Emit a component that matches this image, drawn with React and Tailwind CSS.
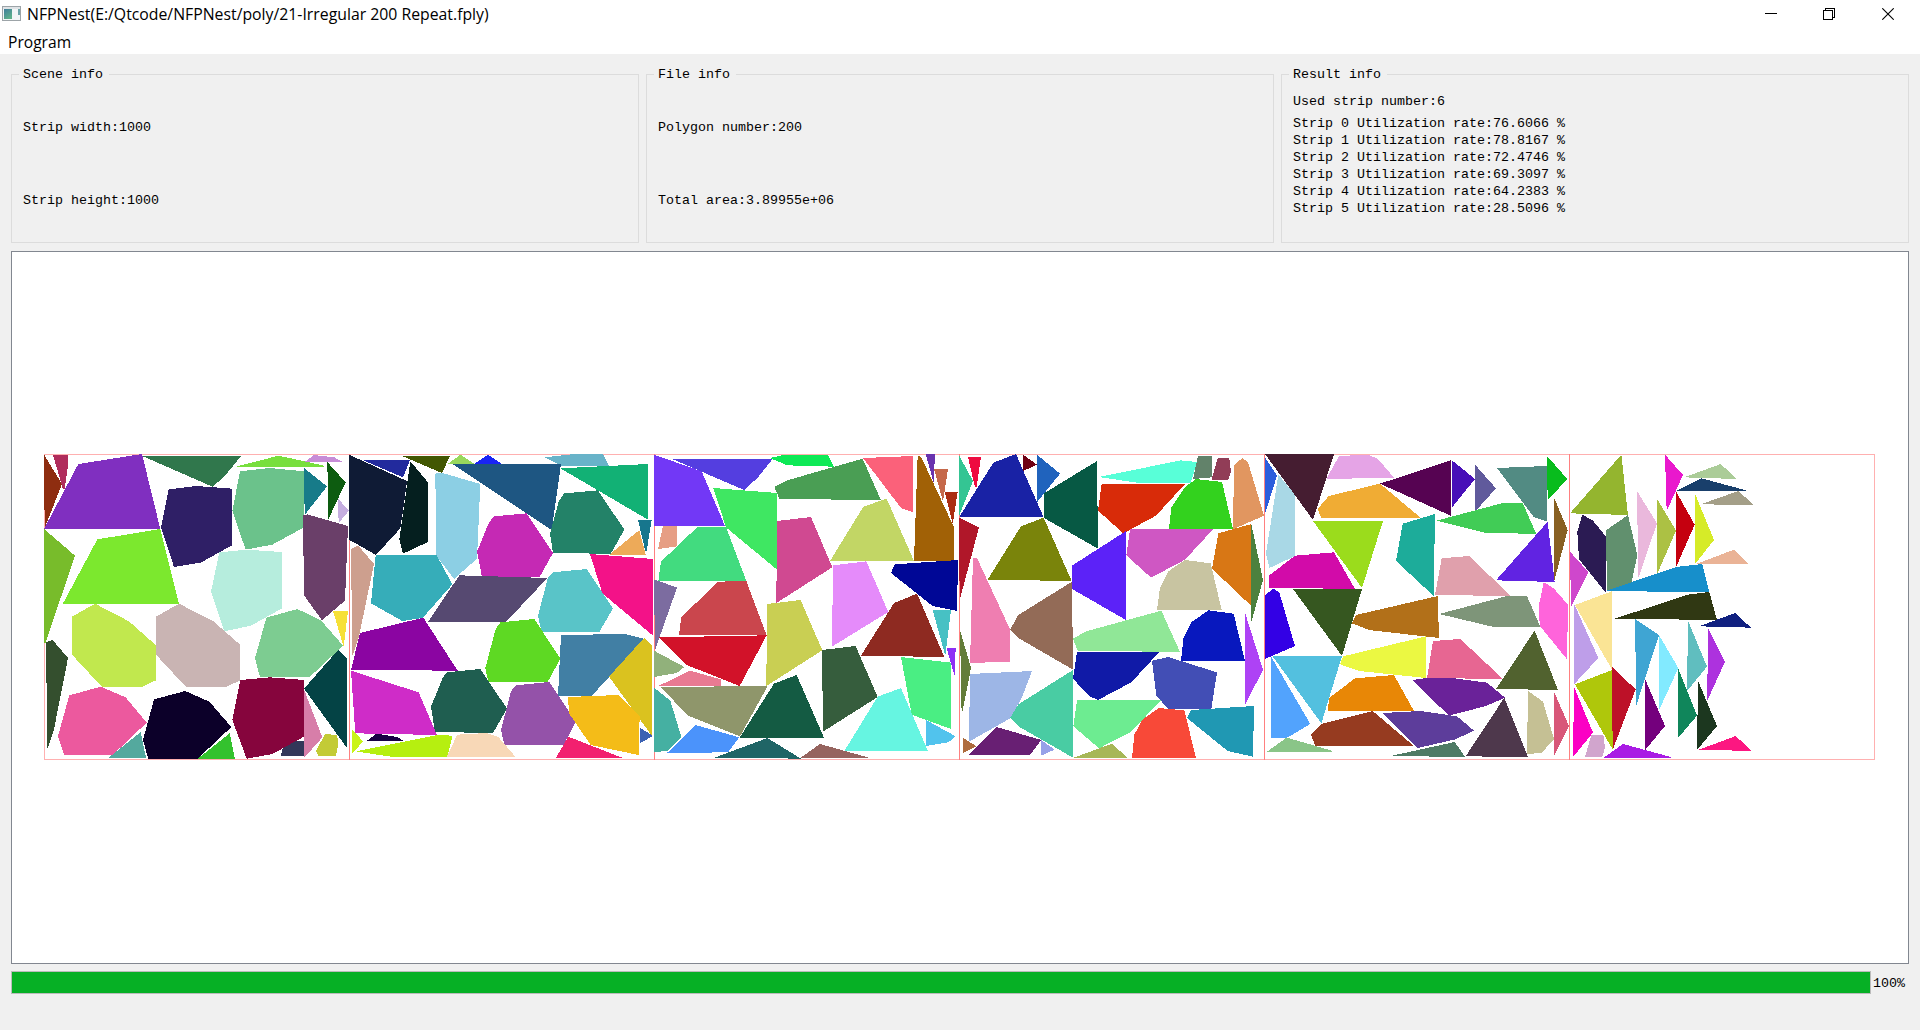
import React from "react";

// Every strip lists its nested polygons as [colour, points]; three units make one pixel.
const strips = [
  [
    ["#8e2d10", "12,14 66,102 14,234"],
    ["#b02d5c", "39,15 84,15 84,45 74,118 69,118"],
    ["#802fc0", "115,42 306,12 361,237 12,237"],
    ["#30774c", "307,18 603,18 553,80 517,110"],
    ["#78df3e", "588,50 716,17 852,47 852,51 588,51"],
    ["#c78cd7", "795,35 822,15 883,22 909,36"],
    ["#2f1f66", "386,118 470,108 576,116 576,286 482,338 402,351 363,232"],
    ["#6bc28b", "600,64 690,54 792,64 792,232 697,284 617,299 577,183"],
    ["#177b89", "792,54 861,109 794,195"],
    ["#0d5c10", "862,36 917,97 865,208"],
    ["#c5aee0", "894,146 927,182 896,219"],
    ["#78bc2b", "12,237 105,317 16,580 12,578"],
    ["#7ce82e", "172,268 361,237 417,462 68,462"],
    ["#b6eddd", "538,307 620,299 726,306 726,475 633,527 553,544 513,425"],
    ["#6a3f69", "789,196 802,193 924,228 915,452 846,511 792,436"],
    ["#c1e84e", "96,500 165,461 267,514 348,586 348,691 305,711 186,711 96,614"],
    ["#c9b4b3", "348,500 417,461 520,514 600,584 601,691 557,711 438,711 348,614"],
    ["#7dcc91", "679,503 772,477 843,511 909,587 808,682 660,682 645,625"],
    ["#f6e038", "879,483 924,483 911,591"],
    ["#344f2e", "18,577 38,570 84,624 41,843 22,897"],
    ["#044345", "792,716 894,600 921,625 921,894"],
    ["#ec599e", "88,736 182,710 257,742 320,818 218,915 72,915 54,858"],
    ["#0c0029", "342,748 436,723 508,755 574,831 472,927 325,927 309,870"],
    ["#54a99e", "302,846 318,923 206,923"],
    ["#34c22e", "569,850 585,927 472,927"],
    ["#333759", "733,873 791,873 791,917 723,917"],
    ["#86053d", "601,690 690,682 792,690 792,860 697,912 620,926 577,810"],
    ["#d77ea9", "792,718 847,862 792,924"],
    ["#c3cb36", "855,852 892,855 894,888 888,917 835,917 828,903"],
  ],
  [
    ["#0f1b35", "12,14 186,93 177,160 166,235 93,315 12,269"],
    ["#222a9d", "52,30 195,30 174,82"],
    ["#425702", "172,18 315,18 291,69"],
    ["#98d85d", "309,41 347,14 387,41"],
    ["#1924f5", "388,41 429,14 469,41"],
    ["#68b3c9", "600,22 690,12 774,12 791,47 650,47"],
    ["#051f1f", "196,34 249,97 249,276 174,311 163,268"],
    ["#8ccfe4", "271,71 289,68 406,102 396,326 327,387 274,317"],
    ["#1e5682", "323,42 648,42 620,240"],
    ["#12b175", "646,55 909,42 909,209"],
    ["#238268", "658,130 759,121 838,239 797,312 624,308 615,250 642,152"],
    ["#17768d", "879,210 920,210 905,303 901,303"],
    ["#edaa59", "883,240 902,315 792,315"],
    ["#c529b4", "446,199 545,190 624,309 584,381 411,381 396,305 430,222"],
    ["#cd9f8e", "18,297 40,287 87,342 42,559 22,618"],
    ["#36adb9", "92,316 275,316 322,403 233,504 172,513 78,460"],
    ["#564971", "343,376 607,384 483,516 249,516"],
    ["#59c4c8", "624,367 725,357 804,475 763,546 590,546 579,498 608,385"],
    ["#f31288", "735,312 925,327 925,558 772,430"],
    ["#8b05a2", "45,549 235,503 338,662 18,660"],
    ["#5ed923", "466,517 568,507 646,626 608,696 430,696 421,654 452,537"],
    ["#417fa4", "648,555 840,552 897,566 740,738 639,738"],
    ["#dac21f", "897,564 921,587 921,858 792,680"],
    ["#cf2cc8", "18,662 221,727 276,855 31,850"],
    ["#1f5e50", "305,667 406,657 486,776 444,849 270,846 258,770 292,686"],
    ["#9452a9", "512,706 613,696 692,815 656,885 478,885 468,840 498,724"],
    ["#f4bc18", "669,741 821,735 884,800 881,915 737,885 672,790"],
    ["#c9f41a", "21,837 54,874 21,912"],
    ["#170044", "66,872 95,851 155,861 178,873"],
    ["#b6ef10", "32,904 276,855 323,857 307,921 137,920"],
    ["#f8d8b7", "337,854 424,849 460,861 511,920 305,920"],
    ["#f2206f", "670,860 831,923 633,923"],
    ["#3c62b3", "885,833 924,858 886,879"],
  ],
  [
    ["#7238f6", "12,14 155,64 225,228 12,228"],
    ["#543ee0", "67,27 368,27 323,83 282,120"],
    ["#0ee956", "359,24 396,16 534,14 551,50 412,46"],
    ["#4a9e54", "373,111 415,90 638,26 693,151 388,146"],
    ["#fb617a", "639,24 789,18 789,187 753,174"],
    ["#a16106", "803,17 813,20 911,230 911,334 792,334"],
    ["#6933ae", "827,12 855,12 851,98"],
    ["#c5684a", "852,57 894,57 879,155"],
    ["#ab2d12", "884,126 923,126 908,222"],
    ["#3fe762", "190,114 381,129 381,359 228,232"],
    ["#d04991", "381,213 483,201 547,352 379,459"],
    ["#c2d665", "640,170 710,146 792,333 540,333"],
    ["#e69e84", "39,228 81,228 81,289 24,297"],
    ["#42db7f", "142,231 228,231 289,393 25,393 33,335"],
    ["#000796", "734,343 924,330 921,483 848,468 723,369"],
    ["#e58bfa", "549,346 649,334 715,486 546,590"],
    ["#7c6ca0", "12,388 81,413 15,600"],
    ["#ca464d", "205,395 289,393 350,556 87,556 94,501"],
    ["#c9cf53", "351,462 452,450 517,601 349,708"],
    ["#8e2a21", "732,459 801,431 883,621 633,617"],
    ["#47c1c4", "848,480 903,480 886,617"],
    ["#8d2ff6", "890,595 917,595 914,678"],
    ["#d21229", "27,562 350,556 269,708 110,645"],
    ["#91b17b", "12,602 103,651 80,669 12,681"],
    ["#e97a92", "27,707 120,662 213,688 213,708"],
    ["#8f966b", "33,711 353,708 270,859 112,796"],
    ["#145b43", "372,701 440,675 522,863 269,863"],
    ["#365d3d", "516,600 617,588 683,741 519,845"],
    ["#4aee83", "753,621 903,638 903,837 785,794"],
    ["#45b0a2", "12,713 61,752 94,861 54,903 12,906"],
    ["#4b93fb", "136,825 268,862 234,907 51,909"],
    ["#66f5e1", "683,740 753,714 834,903 583,903"],
    ["#51c3ed", "828,810 917,859 895,877 828,888"],
    ["#206566", "194,923 352,864 453,926"],
    ["#96645f", "452,923 510,882 657,923"],
  ],
  [
    ["#34c593", "12,16 54,93 12,198"],
    ["#ee0b40", "39,21 78,21 65,112 60,112"],
    ["#1922a5", "115,38 183,12 266,202 12,202"],
    ["#700014", "204,14 246,44 204,63"],
    ["#2063bd", "246,14 315,71 246,157"],
    ["#075944", "426,33 429,296 267,204 267,130"],
    ["#58ffd8", "432,81 677,31 726,36 707,100 545,98"],
    ["#62826a", "729,18 771,18 771,82 714,87"],
    ["#913d57", "788,24 823,24 828,65 820,90 769,91"],
    ["#e19660", "837,45 862,24 879,37 927,197 834,238"],
    ["#d82b09", "440,102 690,102 603,197 505,250 429,182"],
    ["#33d21e", "690,111 723,87 801,96 834,237 642,237 649,172"],
    ["#b01729", "12,202 72,232 14,450"],
    ["#7a840b", "198,229 266,203 350,393 98,389"],
    ["#5c22f8", "513,243 513,510 351,417 351,347"],
    ["#cf57c3", "525,237 775,237 690,329 588,383 514,316"],
    ["#d87715", "790,250 889,222 889,468 771,356"],
    ["#4c813e", "889,222 924,390 889,516"],
    ["#c8c4a1", "640,364 690,330 767,340 800,480 606,480 615,413"],
    ["#ef7eb1", "54,324 66,324 165,538 165,635 45,639"],
    ["#936b57", "351,395 354,659 190,564 165,540 190,495"],
    ["#90e797", "354,566 393,544 619,482 675,606 368,602"],
    ["#0818be", "710,516 760,481 836,491 870,633 678,633 685,566"],
    ["#ae42f5", "870,488 924,659 870,766"],
    ["#637d39", "15,540 48,654 20,796"],
    ["#9db6e6", "45,672 231,663 201,742 166,805 42,875"],
    ["#49cca3", "354,660 354,923 190,829 166,803 190,763"],
    ["#101aa7", "366,606 613,606 529,697 429,750 402,738 354,686"],
    ["#424eb5", "591,632 640,621 786,667 769,777 640,776 604,738"],
    ["#6dec91", "366,750 618,750 529,845 432,895 355,829"],
    ["#f84938", "563,808 612,774 688,781 723,924 531,924 538,854"],
    ["#2098b3", "708,780 897,768 894,920 818,903 696,804"],
    ["#ae6c3e", "24,863 64,889 24,909"],
    ["#681f73", "125,831 259,870 225,915 42,915"],
    ["#97a1e8", "258,870 299,899 258,917"],
    ["#a7b757", "356,923 471,881 517,923"],
  ],
  [
    ["#2b5ddc", "15,22 51,77 15,192"],
    ["#a9d8e6", "55,74 105,134 105,318 28,354 18,310"],
    ["#451d31", "15,12 222,12 159,210"],
    ["#e5a4e6", "237,18 325,14 354,27 402,83 199,87"],
    ["#560352", "360,101 574,30 574,198"],
    ["#f0ac34", "206,138 360,101 483,204 184,204 173,177"],
    ["#480fb8", "576,31 645,87 577,171"],
    ["#605a9c", "645,44 708,115 645,185"],
    ["#528b83", "711,54 861,48 861,215 822,202"],
    ["#08bc1d", "861,18 922,87 863,151"],
    ["#886022", "882,142 923,240 882,396"],
    ["#9bdc1c", "159,213 369,213 306,414"],
    ["#1dac9a", "428,221 525,192 521,438 408,333"],
    ["#41cc56", "530,212 728,159 788,159 829,252 675,248"],
    ["#6123e2", "863,215 884,396 708,391"],
    ["#d20ba9", "105,317 222,307 285,417 27,413 27,377"],
    ["#e0a0ac", "545,325 627,318 753,438 525,435"],
    ["#ff64db", "851,396 882,416 924,464 921,628 839,527 837,465"],
    ["#365720", "99,417 306,417 246,618"],
    ["#3300e5", "15,435 40,416 58,428 105,588 15,627"],
    ["#b27019", "288,495 533,438 537,564 327,540 276,520"],
    ["#7e9579", "537,492 741,438 801,438 841,531 697,530"],
    ["#ebf842", "249,619 498,559 498,684 299,663 240,643"],
    ["#e76692", "519,573 601,567 729,687 501,684"],
    ["#51622f", "824,542 894,720 708,717"],
    ["#52a3fd", "34,621 151,822 80,864 33,864"],
    ["#53c0df", "37,618 246,618 184,820"],
    ["#e88706", "285,685 402,675 462,783 204,783 207,744"],
    ["#6a2299", "456,690 500,684 576,684 681,698 735,743 678,768 567,797"],
    ["#963b20", "183,822 338,783 462,888 166,888 153,855"],
    ["#5d3d9b", "366,789 483,783 591,799 642,842 586,868 474,894"],
    ["#4e384c", "733,743 804,921 617,919"],
    ["#c5c094", "804,723 849,755 882,867 845,909 801,912"],
    ["#d85779", "882,725 927,828 883,915"],
    ["#8ac588", "21,905 80,863 216,902 216,906"],
    ["#4f7b65", "387,919 584,876 615,920"],
  ],
  [
    ["#94b52f", "169,14 189,195 15,190"],
    ["#e918cd", "300,14 354,75 305,183"],
    ["#abcc98", "357,82 467,42 516,87"],
    ["#193f6b", "334,122 410,85 543,121 543,123"],
    ["#a49f88", "407,163 520,123 567,165"],
    ["#eab8dc", "216,123 276,220 220,384"],
    ["#acc144", "276,146 333,242 277,371"],
    ["#c5000f", "333,124 389,224 334,350"],
    ["#d6eb28", "390,131 447,270 390,342"],
    ["#2b1b53", "52,194 84,212 123,260 123,429 42,328 37,245"],
    ["#61906e", "189,195 217,316 199,399 126,423 123,241"],
    ["#cf47cc", "15,305 70,366 18,471"],
    ["#eab396", "396,341 507,299 552,342"],
    ["#178fcb", "125,422 333,351 412,342 433,426 267,425"],
    ["#fae495", "30,465 140,424 140,657"],
    ["#be9ee9", "27,461 100,624 28,702"],
    ["#303813", "149,506 369,434 433,426 456,510"],
    ["#112180", "402,529 510,489 558,533"],
    ["#3fa5d3", "210,507 282,555 214,766"],
    ["#82eaff", "282,555 340,654 282,781"],
    ["#60bebf", "369,512 426,650 366,723"],
    ["#ad32de", "430,536 480,635 426,754"],
    ["#afc70b", "30,703 141,660 144,900"],
    ["#bd1128", "141,651 212,718 143,900"],
    ["#fb00c4", "27,710 84,848 24,921"],
    ["#74007d", "240,686 300,828 240,901"],
    ["#10865b", "340,657 396,797 339,864"],
    ["#1c371f", "399,692 456,828 396,900"],
    ["#d1a5cd", "79,855 115,855 120,893 112,921 60,921"],
    ["#a91be4", "116,923 174,882 318,921 318,924"],
    ["#fc1781", "402,899 512,858 561,903"],
  ],
];

const rates = ["76.6066", "78.8167", "72.4746", "69.3097", "64.2383", "28.5096"];

function AppIcon() {
  return (
    <svg width="19" height="16" viewBox="0 0 19 16" shapeRendering="crispEdges">
      <defs>
        <linearGradient id="pane" x1="0" y1="0" x2="0.6" y2="1">
          <stop offset="0" stopColor="#3f7d9c" />
          <stop offset="1" stopColor="#5eb08a" />
        </linearGradient>
      </defs>
      <rect x="0.5" y="0.5" width="18" height="14" fill="#f3f5f6" stroke="#9da4a8" />
      <rect x="1" y="1" width="17" height="2" fill="#dfe3e6" />
      <rect x="2" y="3" width="8" height="10" fill="url(#pane)" />
      <rect x="16" y="3" width="2" height="6" fill="#6ba3a8" />
    </svg>
  );
}

function TitleBar() {
  return (
    <header className="flex h-7 items-center justify-between pl-0.5">
      <div className="flex items-center gap-[6px]">
        <AppIcon />
        <h1 className="whitespace-pre font-['Open_Sans',sans-serif] text-[15.8px] leading-5">
          NFPNest(E:/Qtcode/NFPNest/poly/21-Irregular 200 Repeat.fply)
        </h1>
      </div>
      <div className="flex items-center pr-[26px]">
        <svg className="mr-[46px]" width="12" height="12" viewBox="0 0 12 12" shapeRendering="crispEdges">
          <path d="M0 5.5H12" stroke="#000" />
        </svg>
        <svg className="mr-[47px]" width="12" height="12" viewBox="0 0 12 12" fill="none" stroke="#000" shapeRendering="crispEdges">
          <path d="M0.5 2.5H9.5V11.5H0.5ZM2.5 2V0.5H11.5V9.5H10" />
        </svg>
        <svg width="12" height="12" viewBox="0 0 12 12" fill="none" stroke="#000" strokeWidth="1.1">
          <path d="M0.3 0.3L11.7 11.7M11.7 0.3L0.3 11.7" />
        </svg>
      </div>
    </header>
  );
}

function GroupBox({ title, titleClass, children }) {
  return (
    <fieldset className="h-[178px] min-w-0 flex-1 border border-[#dcdcdc] px-[11px] pb-px">
      <legend className={"-ml-1 h-[18px] whitespace-pre pl-1 pt-0.5 leading-4 " + titleClass}>{title}</legend>
      {children}
    </fieldset>
  );
}

function NestingView() {
  return (
    <main className="mx-[11px] mt-2 h-[713px] border border-[#828790] bg-white">
      <svg className="block" width="1896" height="711" viewBox="12 252 1896 711" shapeRendering="crispEdges">
        <g fill="none" stroke="#ffb0b0">
          <path d="M44 454.5H1875M44 759.5H1875M44.5 454V760M1874.5 454V760" />
          <path stroke="#ff8080" d="M349.5 454V760M654.5 454V760M959.5 454V760M1264.5 454V760M1569.5 454V760" />
        </g>
        {strips.map((polygons, s) => (
          <g key={s} transform={`translate(${40 + s * 305} 450) scale(${1 / 3})`}>
            {polygons.map(([fill, points], i) => (
              <polygon key={i} fill={fill} points={points} />
            ))}
          </g>
        ))}
      </svg>
    </main>
  );
}

export default function App() {
  return (
    <div className="h-[1030px] w-[1920px] overflow-hidden bg-[#f0f0f0] font-['Liberation_Mono',monospace] text-[13.33px] text-black">
      <div className="h-[54px] bg-white">
        <TitleBar />
        <nav className="flex h-[26px] items-center px-2 pt-0.5 font-['Open_Sans',sans-serif] text-[15.6px] leading-5">Program</nav>
      </div>

      <section className="flex gap-[7px] px-[11px] pt-[11px]">
        <GroupBox title="Scene info" titleClass="w-[90px]">
          <div className="flex flex-col gap-[57px] pt-[37px] leading-4">
            <p>Strip width:1000</p>
            <p>Strip height:1000</p>
          </div>
        </GroupBox>
        <GroupBox title="File info" titleClass="w-[82px]">
          <div className="flex flex-col gap-[57px] pt-[37px] leading-4">
            <p>Polygon number:200</p>
            <p>Total area:3.89955e+06</p>
          </div>
        </GroupBox>
        <GroupBox title="Result info" titleClass="w-[98px]">
          <p className="pt-[11px] leading-4">Used strip number:6</p>
          <ul className="pt-[5px] leading-[17px]">
            {rates.map((rate, i) => (
              <li key={i}>{`Strip ${i} Utilization rate:${rate} %`}</li>
            ))}
          </ul>
        </GroupBox>
      </section>

      <NestingView />

      <footer className="flex items-center gap-[2px] pl-[11px] pt-[7px]">
        <div className="h-[23px] w-[1860px] border border-[#bcbcbc] bg-[#06b025]" />
        <span className="pt-0.5 leading-4">100%</span>
      </footer>
    </div>
  );
}
